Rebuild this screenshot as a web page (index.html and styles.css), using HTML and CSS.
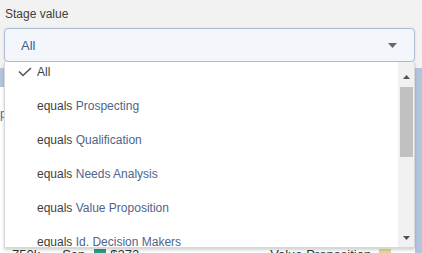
FILE: index.html
```html
<!DOCTYPE html>
<html lang="en">
<head>
    <meta charset="UTF-8">
    <title>Stage value filter</title>
    <link rel="stylesheet" href="styles.css">
</head>
<body>
    <div class="field">
        <div class="field-label">Stage value</div>
        <div class="select">
            <span class="select-value">All</span>
            <svg class="select-arrow" width="9" height="5" viewBox="0 0 9 5"><path d="M0 0h9L4.5 5z" fill="#666"/></svg>
        </div>
    </div>

    <div class="report">
        <div class="report-head"></div>
        <div class="report-body">
            <div class="report-row">p</div>
        </div>
        <div class="report-foot">
            <span class="foot-num">750k</span>
            <span class="foot-sep">Sep</span>
            <span class="swatch swatch-green"></span>
            <span class="foot-amount">$272</span>
            <span class="foot-stage">Value Proposition</span>
            <span class="swatch swatch-beige"></span>
        </div>
    </div>

    <div class="menu">
        <div class="menu-list">
            <div class="menu-item is-selected">
                <span class="menu-icon">
                    <svg width="14" height="10" viewBox="0 0 14 10"><path d="M1 4.5l4 4L13 1" fill="none" stroke="#555" stroke-width="1.6"/></svg>
                </span>
                <span class="menu-all">All</span>
            </div>
            <div class="menu-item"><span class="menu-icon"></span><span class="op">equals</span>&nbsp;<span class="val">Prospecting</span></div>
            <div class="menu-item"><span class="menu-icon"></span><span class="op">equals</span>&nbsp;<span class="val">Qualification</span></div>
            <div class="menu-item"><span class="menu-icon"></span><span class="op">equals</span>&nbsp;<span class="val">Needs Analysis</span></div>
            <div class="menu-item"><span class="menu-icon"></span><span class="op">equals</span>&nbsp;<span class="val">Value Proposition</span></div>
            <div class="menu-item"><span class="menu-icon"></span><span class="op">equals</span>&nbsp;<span class="val">Id. Decision Makers</span></div>
        </div>
        <div class="menu-scroll">
            <div class="scroll-btn scroll-up">
                <svg width="7" height="4" viewBox="0 0 7 4"><path d="M0 4h7L3.5 0z" fill="#505050"/></svg>
            </div>
            <div class="scroll-track"><div class="scroll-thumb"></div></div>
            <div class="scroll-btn scroll-down">
                <svg width="7" height="4" viewBox="0 0 7 4"><path d="M0 0h7L3.5 4z" fill="#505050"/></svg>
            </div>
        </div>
    </div>
</body>
</html>
```

FILE: styles.css
```css
html {
    overflow: hidden;
}
body {
    margin: 0;
    background: #f3f2f2;
    font-family: "Liberation Sans", Arial, sans-serif;
    font-size: 12px;
    color: #3e3e3c;
    position: relative;
    height: 253px;
    overflow: hidden;
}
.field {
    padding: 6px 7px 3px 4px;
}
.field-label {
    line-height: 16px;
    margin-left: 1px;
    margin-bottom: 6px;
}
.select {
    height: 32px;
    border: 1px solid #aebdd1;
    border-radius: 4px;
    background: #f3f6fa;
    box-shadow: 0 0 2px #c9d4e3;
    display: flex;
    align-items: center;
    padding: 0 17px 0 16px;
}
.select-value {
    flex: 1;
    font-size: 13px;
    color: #3d5d8f;
}
.report {
    background: #fff;
}
.report-head {
    margin-top: 3px;
    height: 19px;
    background: #b3c5de;
}
.report-body {
    height: 157px;
    border-right: 7px solid #b3c5de;
}
.report-row {
    padding-top: 19px;
    line-height: 16px;
    color: #54698d;
}
.report-foot {
    display: flex;
    align-items: flex-start;
    height: 8px;
    padding-top: 3px;
    border-right: 7px solid #b3c5de;
    color: #333;
    font-size: 13px;
    line-height: 15px;
    overflow: hidden;
}
.foot-num { margin-left: 12px; }
.foot-sep { margin-left: 22px; }
.swatch {
    width: 12px;
    height: 12px;
    margin-top: 2px;
}
.swatch-green { background: #2a9a86; margin-left: 9px; }
.foot-amount { margin-left: 4px; }
.foot-stage { margin-left: 131px; }
.swatch-beige { background: #e8d59a; margin-left: 8px; }

.menu {
    position: absolute;
    top: 62px;
    left: 4px;
    width: 409px;
    height: 185px;
    border: 1px solid #d8d8d8;
    border-top: none;
    background: #fff;
    box-shadow: 0 2px 3px rgba(0, 0, 0, 0.18);
    display: flex;
}
.menu-list {
    flex: 1;
    overflow: hidden;
}
.menu-item {
    display: flex;
    align-items: center;
    height: 34px;
    white-space: nowrap;
}
.menu-item.is-selected {
    margin-top: -7px;
}
.menu-icon {
    width: 19px;
    padding-left: 13px;
    display: flex;
    align-items: center;
}
.menu-all { color: #3e3e3c; }
.op { color: #3e3e3c; }
.val { color: #50648a; }

.menu-scroll {
    width: 16px;
    background: #f1f1f1;
    display: flex;
    flex-direction: column;
}
.scroll-btn {
    display: flex;
    justify-content: center;
}
.scroll-up { align-items: flex-end; height: 17px; }
.scroll-down { align-items: flex-start; padding-top: 13px; height: 11px; }
.scroll-track {
    flex: 1;
    padding: 8px 1px 0 2px;
}
.scroll-thumb {
    height: 70px;
    background: #c1c1c1;
}
```
